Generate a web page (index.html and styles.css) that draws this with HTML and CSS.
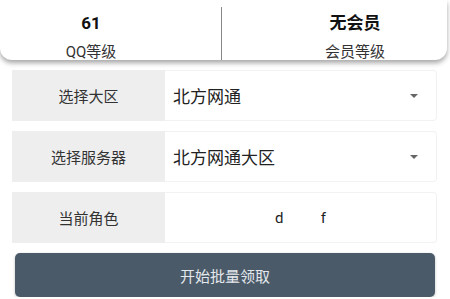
FILE: index.html
```html
<!DOCTYPE html>
<html>
<head>
  <title>批量领取</title>
  <link rel="stylesheet" href="styles.css">
</head>
<body>
  <div class="card">
    <div class="stat stat-left">
      <span class="stat-value">61</span>
      <span class="stat-label">QQ等级</span>
    </div>
    <div class="stat stat-right">
      <span class="stat-value">无会员</span>
      <span class="stat-label">会员等级</span>
    </div>
  </div>
  <div class="form">
    <div class="row">
      <div class="row-label">选择大区</div>
      <div class="row-value select">
        <span>北方网通</span>
        <span class="arrow"></span>
      </div>
    </div>
    <div class="row">
      <div class="row-label">选择服务器</div>
      <div class="row-value select">
        <span>北方网通大区</span>
        <span class="arrow"></span>
      </div>
    </div>
    <div class="row">
      <div class="row-label">当前角色</div>
      <div class="row-value role">d          f</div>
    </div>
    <div class="button">开始批量领取</div>
  </div>
</body>
</html>
```

FILE: styles.css
```css
body {
  margin: 0;
  padding: 0;
  background: #ffffff;
  font-family: Roboto, "Noto Sans CJK SC", sans-serif;
  color: #222;
  overflow: hidden;
}
.card {
  display: flex;
  height: 60px;
  margin-right: 3px;
  background: #fff;
  border-radius: 0 0 12px 12px;
  box-shadow: 0 3px 5px rgba(0, 0, 0, 0.35);
}
.stat {
  display: flex;
  flex-direction: column;
  align-items: center;
  box-sizing: border-box;
}
.stat-left {
  width: 222px;
  padding-right: 40px;
  padding-top: 12px;
  position: relative;
}
.stat-left::after {
  content: "";
  position: absolute;
  right: 0;
  top: 7px;
  bottom: 0;
  width: 1px;
  background: #888;
}
.stat-right {
  flex: 1;
  padding-left: 41px;
  padding-top: 12px;
}
.stat-value {
  font-size: 17px;
  font-weight: bold;
  line-height: 22px;
  color: #111;
}
.stat-label {
  font-size: 15px;
  line-height: 20px;
  margin-top: 8px;
  color: #333;
}
.form {
  display: flex;
  flex-direction: column;
  gap: 10px;
  padding: 10px 13px 0 12px;
}
.row {
  display: flex;
  height: 51px;
}
.row-label {
  width: 153px;
  background: #eeeeee;
  display: flex;
  align-items: center;
  justify-content: center;
  font-size: 15px;
  color: #333;
}
.row-value {
  flex: 1;
  background: #fff;
  border: 1px solid #f2f2f2;
  border-left: none;
  border-radius: 0 4px 4px 0;
  display: flex;
  align-items: center;
}
.select {
  justify-content: space-between;
  padding: 0 18px 0 8px;
  font-size: 17px;
  color: #222;
}
.arrow {
  width: 0;
  height: 0;
  border-left: 4px solid transparent;
  border-right: 4px solid transparent;
  border-top: 4px solid #666;
}
.role {
  justify-content: center;
  white-space: pre;
  font-size: 15px;
  color: #222;
}
.button {
  margin: 0 2px 0 3px;
  height: 44px;
  background: #4a5a68;
  border-radius: 5px;
  display: flex;
  align-items: center;
  justify-content: center;
  font-size: 15px;
  color: #e4e8ec;
  box-shadow: 0 1px 3px rgba(0, 0, 0, 0.25);
}
```
